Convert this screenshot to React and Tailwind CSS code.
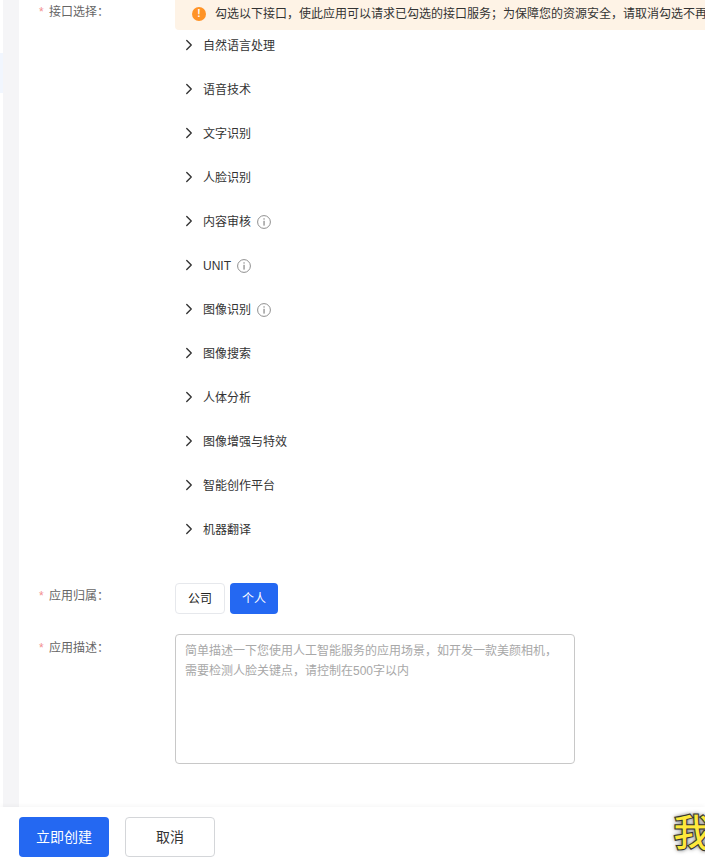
import React from 'react';
import { ChevronRight } from 'lucide-react';

const apiGroups = [
  { name: '自然语言处理' },
  { name: '语音技术' },
  { name: '文字识别' },
  { name: '人脸识别' },
  { name: '内容审核', info: true },
  { name: 'UNIT', info: true },
  { name: '图像识别', info: true },
  { name: '图像搜索' },
  { name: '人体分析' },
  { name: '图像增强与特效' },
  { name: '智能创作平台' },
  { name: '机器翻译' },
];

const InfoIcon = () => (
  <svg width="14" height="14" viewBox="0 0 14 14" fill="none" className="ml-[6px] mt-[3px] shrink-0">
    <circle cx="7" cy="7" r="6.4" stroke="#8f8f8f" strokeWidth="1" />
    <rect x="6.4" y="5.8" width="1.3" height="4.8" fill="#8f8f8f" />
    <rect x="6.4" y="3.3" width="1.3" height="1.3" fill="#8f8f8f" />
  </svg>
);

const Label = ({ text, className }) => (
  <div className={`w-[156px] shrink-0 pl-5 flex text-xs leading-5 text-[#666] ${className}`}>
    <span className="w-[10px] text-[#f38f8f]">*</span>
    <span>{text}：</span>
  </div>
);

export default function App() {
  return (
    <div className="h-[859px] flex flex-col overflow-hidden bg-white text-xs font-['Liberation_Sans','Noto_Sans_CJK_SC',sans-serif]">
      <div className="flex-1 flex min-h-0">
        {/* sidebar edge */}
        <div className="w-[3px] shrink-0 pt-[53px]">
          <div className="h-10 bg-[#f1f6fe]" />
        </div>
        <div className="w-4 shrink-0 bg-[#f5f5f7]" />

        <div className="flex-1 min-w-0 overflow-hidden">
          <div className="flex">
            <Label text="接口选择" className="pt-[2px]" />
            <div className="flex-1 min-w-0">
              <div className="h-[30px] flex items-center pl-[17px] pb-[2px] bg-[#fef3e6] rounded-bl-[4px] whitespace-nowrap overflow-hidden text-[#333]">
                <span className="w-[14px] h-[14px] mr-[9px] shrink-0 rounded-full bg-[#ff9326] text-white text-[10px] font-bold leading-[14px] text-center">!</span>
                勾选以下接口，使此应用可以请求已勾选的接口服务；为保障您的资源安全，请取消勾选不再继续使用的接口
              </div>
              {apiGroups.map((g) => (
                <div key={g.name} className="h-11 flex items-start pt-[6px] pl-[5px] text-[#333]">
                  <ChevronRight size={18} strokeWidth={1.8} className="text-[#333] shrink-0 mr-[5px]" />
                  <span className="leading-5">{g.name}</span>
                  {g.info && <InfoIcon />}
                </div>
              ))}
            </div>
          </div>

          <div className="flex mt-[25px]">
            <Label text="应用归属" className="pt-[3px]" />
            <div className="flex gap-[5px]">
              <button className="w-[50px] h-[31px] rounded-[4px] border border-[#e6e8ec] bg-white text-[#222]">公司</button>
              <button className="w-[48px] h-[31px] rounded-[4px] bg-[#2468f2] text-white">个人</button>
            </div>
          </div>

          <div className="flex mt-5">
            <Label text="应用描述" className="pt-[4px]" />
            <div className="w-[400px] h-[130px] rounded-[4px] border border-[#c8c8c8] px-[9px] py-[6px] leading-5 text-[#a8a8a8]">
              简单描述一下您使用人工智能服务的应用场景，如开发一款美颜相机，
              <br />
              需要检测人脸关键点，请控制在500字以内
            </div>
          </div>
        </div>
      </div>

      <div className="h-[52px] shrink-0 flex items-start pt-[10px] pl-[19px] bg-white shadow-[0_-2px_4px_rgba(0,0,0,0.03)] relative text-sm overflow-hidden">
        <button className="w-[90px] h-10 rounded-[4px] bg-[#2468f2] text-white">立即创建</button>
        <button className="w-[90px] h-10 ml-4 rounded-[4px] border border-[#d4d6d9] bg-white text-[#333]">取消</button>
        <span className="ml-auto mr-[-6px] mt-[-7px] text-[38px] leading-[46px] font-bold text-[#ffe93b] [-webkit-text-stroke:1px_#333] [text-shadow:0_0_4px_#555]">我</span>
      </div>
    </div>
  );
}
